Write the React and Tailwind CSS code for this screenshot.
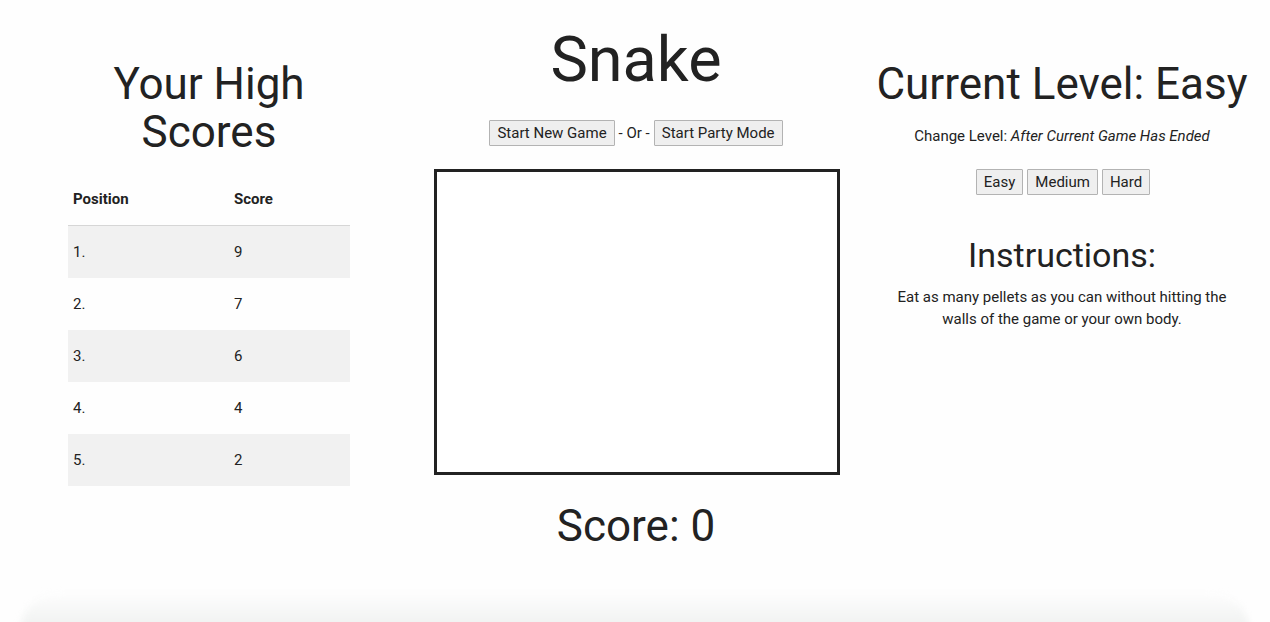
import React from "react";

const btn =
  "h-[26px] px-[7px] border border-[#b3b3b3] bg-[#efefef] text-[15px] leading-none text-[#222] rounded-[1px]";

export default function App() {
  const rows = [
    ["1.", "9"],
    ["2.", "7"],
    ["3.", "6"],
    ["4.", "4"],
    ["5.", "2"],
  ];
  return (
    <div
      className="w-[1270px] h-[622px] overflow-hidden bg-[#fefefe] text-[#222] flex flex-col"
      style={{ fontFamily: "Roboto, 'Liberation Sans', sans-serif" }}
    >
      <div className="flex flex-1">
        {/* Left column */}
        <div className="w-[418px] flex flex-col items-center pt-[60px]">
          <h2 className="text-[44px] leading-[1.1] text-center w-[300px]">
            Your High Scores
          </h2>
          <div className="mt-[16px] w-[282px] text-[15px]">
            <div className="flex h-[53px] items-center border-b border-[#d6d6d6] font-bold pt-[1px]">
              <div className="w-[161px] pl-[5px]">Position</div>
              <div className="pl-[5px]">Score</div>
            </div>
            {rows.map((r, i) => (
              <div
                key={i}
                className={
                  "flex h-[52px] items-center pt-[1px] " +
                  (i % 2 === 0 ? "bg-[#f1f1f1]" : "")
                }
              >
                <div className="w-[161px] pl-[5px]">{r[0]}</div>
                <div className="pl-[5px]">{r[1]}</div>
              </div>
            ))}
          </div>
        </div>

        {/* Middle column */}
        <div className="w-[436px] flex flex-col items-center pt-[21px]">
          <h1 className="text-[63px] leading-[77px]">Snake</h1>
          <div className="mt-[22px] flex items-center text-[15px]">
            <button className={btn}>Start New Game</button>
            <span className="mx-[4px]">- Or -</span>
            <button className={btn}>Start Party Mode</button>
          </div>
          <div className="mt-[23px] ml-[2px] w-[406px] h-[306px] border-[3px] border-[#222] bg-white"></div>
          <div className="mt-[25px] text-[44px] leading-[53px]">Score: 0</div>
        </div>

        {/* Right column */}
        <div className="w-[416px] flex flex-col items-center pt-[60px]">
          <h2 className="text-[44px] leading-[1.1] whitespace-nowrap">
            Current Level: Easy
          </h2>
          <p className="mt-[18px] text-[15px] leading-[20px]">
            Change Level: <em>After Current Game Has Ended</em>
          </p>
          <div className="mt-[23px] ml-[2px] flex gap-[4px]">
            <button className={btn}>Easy</button>
            <button className={btn}>Medium</button>
            <button className={btn}>Hard</button>
          </div>
          <h3 className="mt-[42px] text-[34px] leading-[1.1]">Instructions:</h3>
          <p className="mt-[11px] px-[40px] text-[15px] leading-[22px] text-center">
            Eat as many pellets as you can without hitting the walls of the game
            or your own body.
          </p>
        </div>
      </div>
      <div className="h-[40px] -mb-[10px] mx-[20px] rounded-t-[40px] bg-gradient-to-b from-[#fefefe] to-[#eef0ef] blur-[3px]"></div>
    </div>
  );
}
